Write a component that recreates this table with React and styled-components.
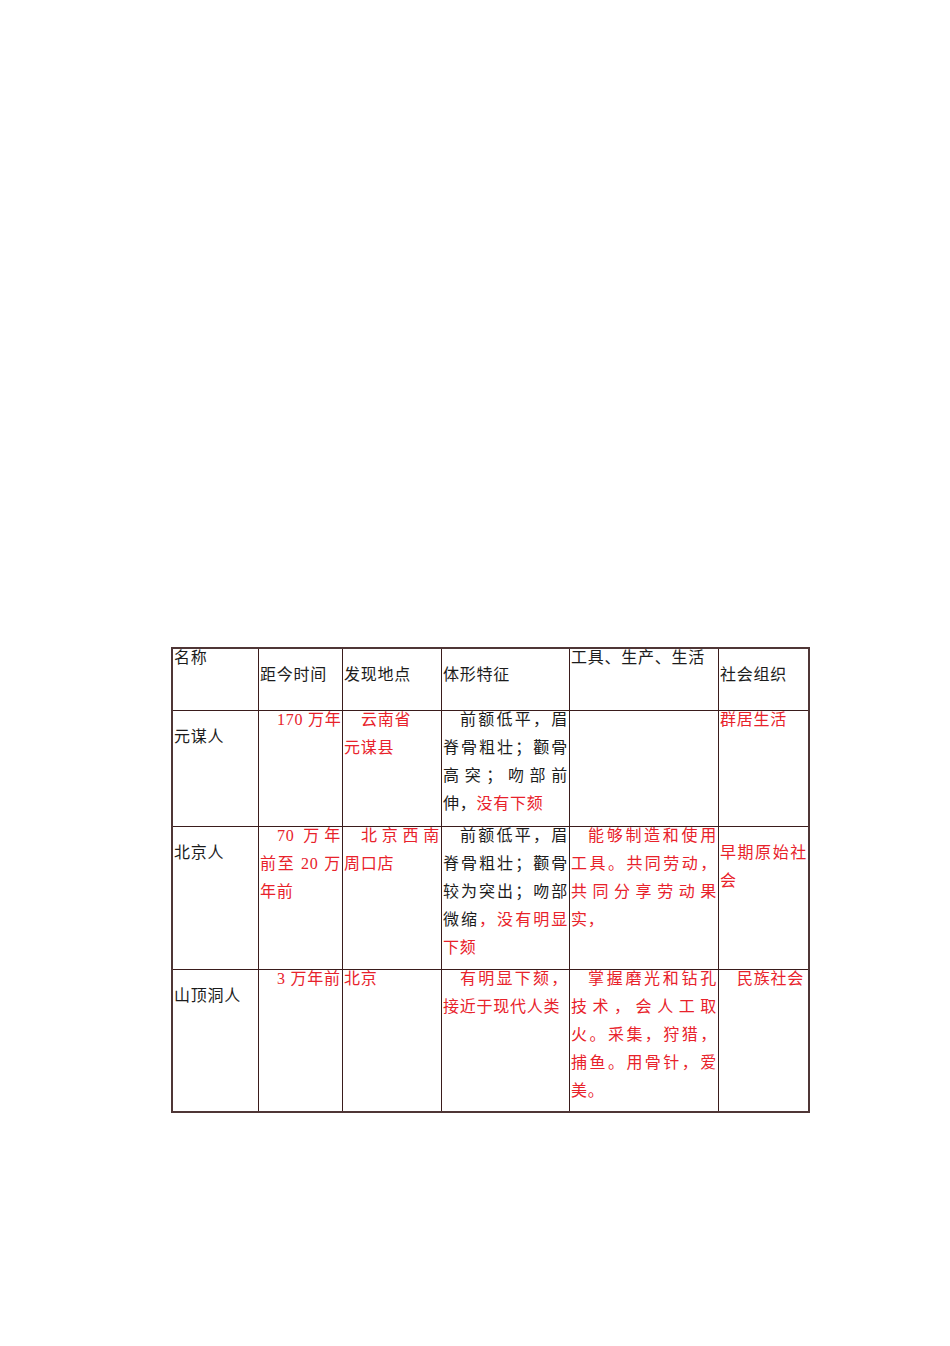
import React from "react";
import styled, { createGlobalStyle } from "styled-components";

const Global = createGlobalStyle`
  html, body { margin: 0; padding: 0; background: #ffffff; }
  body { font-family: "Liberation Serif", "Noto Sans CJK SC", serif; }
`;

const Page = styled.div`
  width: 950px;
  min-height: 1346px;
  box-sizing: border-box;
  padding: 647px 0 0 171px;
  background: #fff;
`;

const Table = styled.div`
  display: grid;
  grid-template-columns: 86px 84px 99px 128px 149px 89px;
  grid-template-rows: 62px 116px 143px 141px;
  width: max-content;
  border: 2px solid #4f3636;
`;

const Cell = styled.div`
  box-sizing: border-box;
  padding: ${(p) => (p.$drop ? "17px" : "0")} 1px 0 1px;
  border-right: ${(p) => (p.$lastCol ? "none" : "1px solid #3a1c1c")};
  border-bottom: ${(p) => (p.$lastRow ? "none" : "1px solid #3a1c1c")};
  color: ${(p) => (p.$red ? "#e8222b" : "#1c1c1c")};
  font-size: 16px;
  letter-spacing: 0.75px;
  overflow: hidden;
`;

const Line = styled.div`
  height: 28px;
  line-height: 18px;
  text-indent: ${(p) => (p.$indent ? "17px" : "0")};
  text-align: ${(p) => (p.$justify ? "justify" : "left")};
  text-align-last: ${(p) => (p.$justify ? "justify" : "auto")};
  white-space: ${(p) => (p.$justify ? "normal" : "nowrap")};
`;

const Seg = styled.span`
  color: ${(p) => (p.$red === true ? "#e8222b" : p.$red === false ? "#1c1c1c" : "inherit")};
`;

const L = (text, opts = {}) => ({ text, ...opts });

const rows = [
  [
    { lines: [L("名称")] },
    { drop: true, lines: [L("距今时间")] },
    { drop: true, lines: [L("发现地点")] },
    { drop: true, lines: [L("体形特征")] },
    { lines: [L("工具、生产、生活")] },
    { drop: true, lines: [L("社会组织")] },
  ],
  [
    { drop: true, lines: [L("元谋人")] },
    { red: true, lines: [L("170 万年", { indent: true })] },
    { red: true, lines: [L("云南省", { indent: true }), L("元谋县")] },
    {
      lines: [
        L("前额低平，眉", { indent: true, justify: true }),
        L("脊骨粗壮；颧骨", { justify: true }),
        L("高突；吻部前", { justify: true }),
        L([["伸，", false], ["没有下颏", true]]),
      ],
    },
    { lines: [] },
    { red: true, lines: [L("群居生活")] },
  ],
  [
    { drop: true, lines: [L("北京人")] },
    {
      red: true,
      lines: [
        L("70 万年", { indent: true, justify: true }),
        L("前至 20 万", { justify: true }),
        L("年前"),
      ],
    },
    {
      red: true,
      lines: [L("北京西南", { indent: true, justify: true }), L("周口店")],
    },
    {
      lines: [
        L("前额低平，眉", { indent: true, justify: true }),
        L("脊骨粗壮；颧骨", { justify: true }),
        L("较为突出；吻部", { justify: true }),
        L([["微缩", false], ["，没有明显", true]], { justify: true }),
        L([["下颏", true]]),
      ],
    },
    {
      red: true,
      lines: [
        L("能够制造和使用", { indent: true, justify: true }),
        L("工具。共同劳动，", { justify: true }),
        L("共同分享劳动果", { justify: true }),
        L("实，"),
      ],
    },
    {
      red: true,
      drop: true,
      lines: [L("早期原始社", { justify: true }), L("会")],
    },
  ],
  [
    { drop: true, lines: [L("山顶洞人")] },
    { red: true, lines: [L("3 万年前", { indent: true })] },
    { red: true, lines: [L("北京")] },
    {
      red: true,
      lines: [
        L("有明显下颏，", { indent: true, justify: true }),
        L("接近于现代人类"),
      ],
    },
    {
      red: true,
      lines: [
        L("掌握磨光和钻孔", { indent: true, justify: true }),
        L("技术，会人工取", { justify: true }),
        L("火。采集，狩猎，", { justify: true }),
        L("捕鱼。用骨针，爱", { justify: true }),
        L("美。"),
      ],
    },
    { red: true, lines: [L("民族社会", { indent: true })] },
  ],
];

export default function App() {
  return (
    <Page>
      <Global />
      <Table>
        {rows.map((row, ri) =>
          row.map((cell, ci) => (
            <Cell
              key={`${ri}-${ci}`}
              $drop={cell.drop}
              $red={cell.red}
              $lastCol={ci === row.length - 1}
              $lastRow={ri === rows.length - 1}
            >
              {cell.lines.map((ln, li) => (
                <Line key={li} $indent={ln.indent} $justify={ln.justify}>
                  {Array.isArray(ln.text)
                    ? ln.text.map(([t, r], si) => (
                        <Seg key={si} $red={r}>
                          {t}
                        </Seg>
                      ))
                    : ln.text}
                </Line>
              ))}
            </Cell>
          ))
        )}
      </Table>
    </Page>
  );
}
